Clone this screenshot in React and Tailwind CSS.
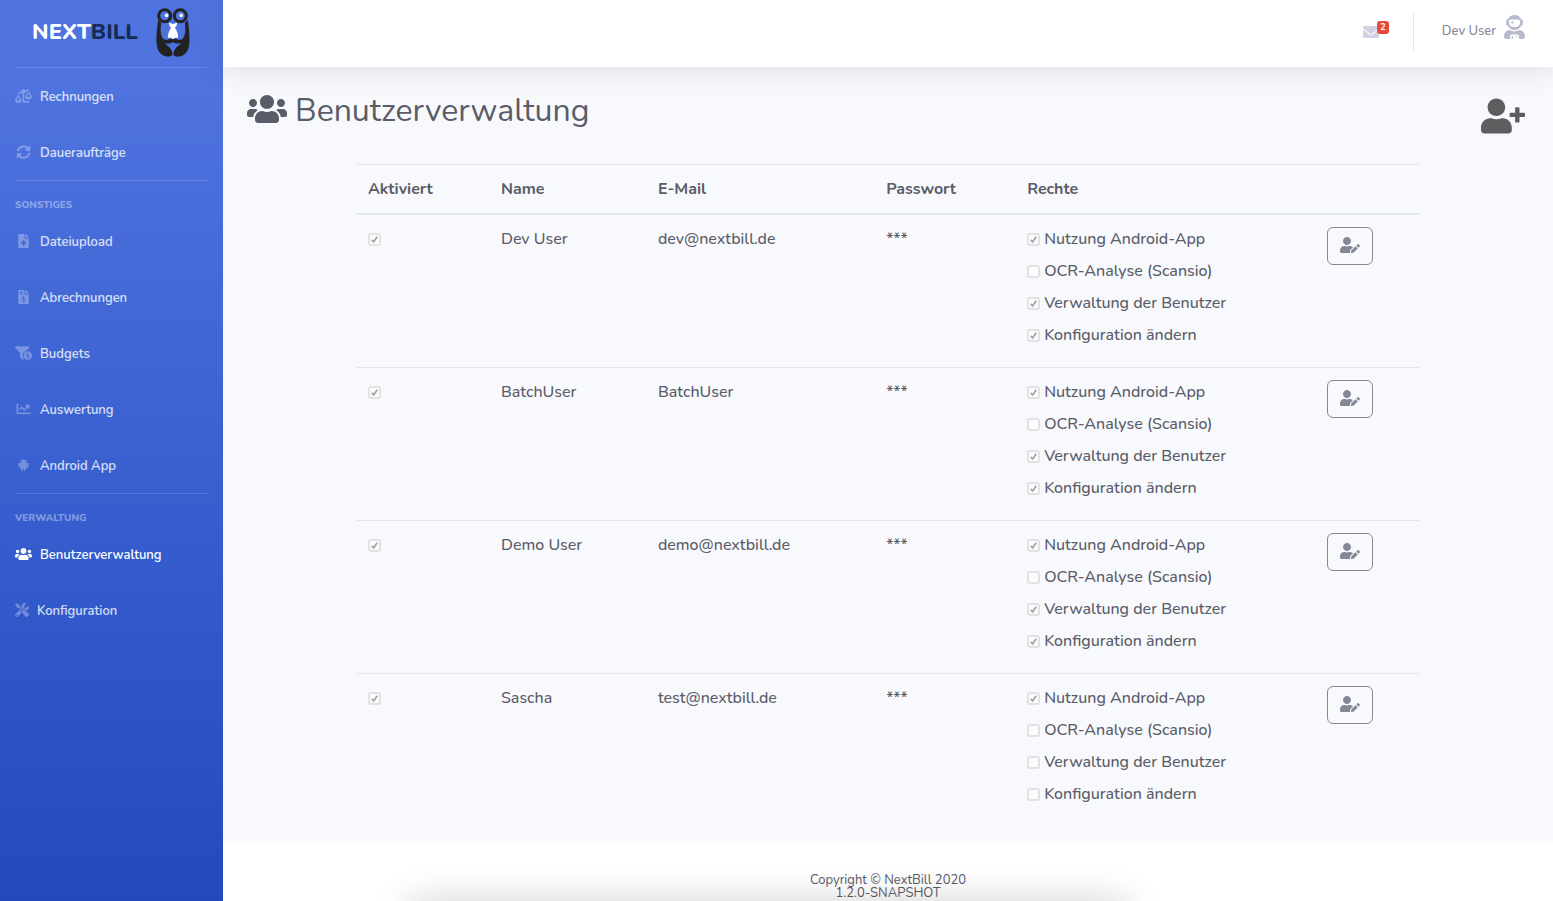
import React from "react";
import {
  FaBalanceScaleLeft,
  FaSyncAlt,
  FaFileUpload,
  FaFileInvoiceDollar,
  FaFunnelDollar,
  FaChartLine,
  FaUsers,
  FaTools,
  FaEnvelope,
  FaUserAstronaut,
  FaUserPlus,
  FaUserEdit,
} from "react-icons/fa";

function AndroidIcon({ className }) {
  return (
    <svg viewBox="0 0 448 512" fill="currentColor" className={className} aria-hidden="true">
      <path d="M89.6 204.5v115.8c0 15.4-12.1 27.7-27.5 27.7-15.3 0-30.1-12.4-30.1-27.7V204.5c0-15.1 14.8-27.5 30.1-27.5 15.1 0 27.5 12.4 27.5 27.5zm10.8 157c0 16.4 13.2 29.6 29.6 29.6h19.9l.3 61.1c0 36.9 55.2 36.6 55.2 0v-61.1h37.2v61.1c0 36.7 55.5 36.8 55.5 0v-61.1h20.2c16.2 0 29.4-13.2 29.4-29.6V182.1H100.4v179.4zm248-189.1H99.3c0-42.8 25.6-80 63.6-99.4l-19.1-35.3c-2.8-4.9 4.3-8 6.7-3.8l19.4 35.6c34.9-15.5 75-14.7 108.3 0L297.5 34c2.5-4.3 9.5-1.1 6.7 3.8L285.1 73c37.7 19.4 63.3 56.6 63.3 99.4zm-170.7-55.5c0-5.7-4.6-10.5-10.5-10.5-5.7 0-10.2 4.8-10.2 10.5s4.6 10.5 10.2 10.5c5.9 0 10.5-4.8 10.5-10.5zm113.4 0c0-5.7-4.6-10.5-10.2-10.5-5.9 0-10.5 4.8-10.5 10.5s4.6 10.5 10.5 10.5c5.6 0 10.2-4.8 10.2-10.5zm94.8 60.1c-15.1 0-27.5 12.1-27.5 27.5v115.8c0 15.4 12.4 27.7 27.5 27.7 15.4 0 30.1-12.4 30.1-27.7V204.5c0-15.4-14.8-27.5-30.1-27.5z" />
    </svg>
  );
}

function Mascot() {
  return (
    <svg viewBox="0 0 34 50" className="h-[50px] w-[34px]" aria-hidden="true">
      <path
        d="M2.2 12C.8 21 .2 30 .6 35.500C1.200 44 6.500 48.600 12 48.600C14.500 48.600 16 47.600 16.800 46.400C17.600 47.600 19.500 48.600 22 48.600C27.500 48.600 32.800 44 33.400 35.500C33.800 30 33.200 21 31.800 12L28.800 15C29.600 20 29.800 27 27 30.500C25.300 32.300 23 31.800 21 31.200C19.200 30.400 17.800 30.600 17 31.400C16.200 30.600 14.800 30.400 13 31.200C11 31.800 8.700 32.300 7 30.500C4.200 27 4.400 20 5.200 15Z"
        fill="#222"
      />
      <path d="M8.200 35.200C12 36 15 35.600 17 34.200C19 35.600 22 36 25.800 35.200C21 38 17.600 41 17.300 47L16.600 47C16.300 41 13 38 8.200 35.200Z" fill="#4e73df" />
      <path d="M12.800 14.500L17 16L21.200 14.500L20.300 18.600L18.800 19.600C20.800 22.500 22.400 26.500 22.200 30C20.500 29.600 18.500 29.800 17 31C15.500 29.800 13.500 29.600 11.800 30C11.600 26.500 13.200 22.500 15.200 19.600L13.700 18.600Z" fill="#fff" />
      <circle cx="8.700" cy="7.800" r="6" fill="#4e73df" stroke="#222" strokeWidth="3" />
      <circle cx="24.300" cy="7.800" r="6" fill="#4e73df" stroke="#222" strokeWidth="3" />
      <circle cx="10.600" cy="7.400" r="1.800" fill="#fff" />
      <circle cx="25.200" cy="7.400" r="1.800" fill="#fff" />
    </svg>
  );
}

function NavItem({ icon: Icon, label, active, narrow }) {
  return (
    <a
      href="#"
      aria-current={active ? "page" : undefined}
      className={
        "flex h-14 items-center gap-2 text-[13px] leading-5 font-semibold " +
        (active ? "text-white" : "text-white/80")
      }
    >
      <Icon
        className={
          (narrow ? "h-[14px] w-[14px] " : "h-[14px] w-[17px] ") + (active ? "text-white" : "text-white/30")
        }
      />
      <span className="pt-px">{label}</span>
    </a>
  );
}

function NavSection({ title, children }) {
  return (
    <div className="border-t border-white/15">
      {title && (
        <h2 className="flex h-8 items-center pt-4 text-[10px] font-extrabold text-white/40 uppercase">{title}</h2>
      )}
      {children}
    </div>
  );
}

function Check({ checked, label, hideLabel }) {
  return (
    <label className="flex h-6 items-center gap-1">
      <span className="grid size-[13px] shrink-0">
        <input
          type="checkbox"
          checked={checked}
          disabled
          readOnly
          aria-label={hideLabel ? label : undefined}
          className="col-start-1 row-start-1 size-[13px] appearance-none rounded-[3px] border-2 border-[#e2e2e4] bg-[#fcfcfd]"
        />
        {checked && (
          <svg viewBox="0 0 13 13" className="pointer-events-none col-start-1 row-start-1 size-[13px]" aria-hidden="true">
            <path d="M3.800 6.800L5.700 8.900L9.200 3.800" fill="none" stroke="#a3a3a5" strokeWidth="1.800" />
          </svg>
        )}
      </span>
      {!hideLabel && label}
    </label>
  );
}

const rights = ["Nutzung Android-App", "OCR-Analyse (Scansio)", "Verwaltung der Benutzer", "Konfiguration ändern"];

const users = [
  { name: "Dev User", mail: "dev@nextbill.de", granted: [true, false, true, true] },
  { name: "BatchUser", mail: "BatchUser", granted: [true, false, true, true] },
  { name: "Demo User", mail: "demo@nextbill.de", granted: [true, false, true, true] },
  { name: "Sascha", mail: "test@nextbill.de", granted: [true, false, false, false] },
];

export default function App() {
  return (
    <div className="flex min-h-screen bg-white font-[Nunito,Lato,sans-serif] text-[#5a5c69]">
      <aside className="w-[223px] shrink-0 bg-linear-to-b from-[#4e73df] from-10% to-[#224abe] px-4 pl-[15px]">
        <a href="#" className="flex h-[67px] items-center justify-center gap-[18px] pb-[2px]">
          <span className="text-[22px] font-extrabold text-white">
            NEXT<span className="text-[#162a56]">BILL</span>
          </span>
          <Mascot />
        </a>
        <nav>
          <NavSection>
            <NavItem icon={FaBalanceScaleLeft} label="Rechnungen" />
            <NavItem icon={FaSyncAlt} label="Daueraufträge" />
          </NavSection>
          <NavSection title="Sonstiges">
            <NavItem icon={FaFileUpload} label="Dateiupload" />
            <NavItem icon={FaFileInvoiceDollar} label="Abrechnungen" />
            <NavItem icon={FaFunnelDollar} label="Budgets" />
            <NavItem icon={FaChartLine} label="Auswertung" />
            <NavItem icon={AndroidIcon} label="Android App" />
          </NavSection>
          <NavSection title="Verwaltung">
            <NavItem icon={FaUsers} label="Benutzerverwaltung" active />
            <NavItem icon={FaTools} label="Konfiguration" narrow />
          </NavSection>
        </nav>
      </aside>

      <div className="flex min-w-0 grow flex-col">
        <header className="z-10 flex h-[67px] items-center justify-end bg-white pr-7 pb-[3px] shadow-[0_2px_28px_rgba(58,59,69,0.15)]">
          <a href="#" aria-label="Nachrichten" className="relative mr-[34px] text-[#d1d3e2]">
            <FaEnvelope className="size-4" />
            <span className="absolute -top-[3px] left-[14px] flex h-[13px] w-3 items-center justify-center rounded-[3px] bg-[#e74a3b] text-[9px] font-bold text-white">
              2
            </span>
          </a>
          <div className="h-[38px] w-px bg-[#e3e6f0]" />
          <a href="#" className="ml-7 flex items-center gap-2 text-[13px] font-medium text-[#858796]">
            Dev User
            <FaUserAstronaut className="mb-[10px] h-6 w-[21px] text-[#b7b9cc]" />
          </a>
        </header>

        <main className="grow bg-[#f8f9fc] px-6 pt-[25px] pb-[15px]">
          <div className="mb-6 flex items-start justify-between pr-1">
            <h1 className="flex items-center gap-2 text-[32px] leading-[38px]">
              <FaUsers className="-mt-1 size-10" />
              Benutzerverwaltung
            </h1>
            <button type="button" aria-label="Benutzer anlegen" className="h-12">
              <FaUserPlus className="h-9 w-11 text-[#5e5e60]" />
            </button>
          </div>

          <table className="mx-auto w-[83%] table-fixed border-collapse text-left text-base leading-6 font-medium">
            <colgroup>
              <col className="w-[12.5%]" />
              <col className="w-[14.750%]" />
              <col className="w-[21.450%]" />
              <col className="w-[13.250%]" />
              <col className="w-[28.200%]" />
              <col />
            </colgroup>
            <thead>
              <tr className="border-t border-b-2 border-[#e3e6f0]">
                <th className="p-3">Aktiviert</th>
                <th className="p-3">Name</th>
                <th className="p-3">E-Mail</th>
                <th className="p-3">Passwort</th>
                <th className="p-3">Rechte</th>
                <td className="p-3"></td>
              </tr>
            </thead>
            <tbody>
              {users.map((user) => (
                <tr key={user.name} className="border-t border-[#e3e6f0] align-top">
                  <td className="p-3">
                    <Check checked label={"Aktiviert: " + user.name} hideLabel />
                  </td>
                  <td className="p-3">{user.name}</td>
                  <td className="p-3">{user.mail}</td>
                  <td className="p-3">***</td>
                  <td className="p-3">
                    <div className="flex flex-col gap-2 pb-2">
                      {rights.map((right, i) => (
                        <Check key={right} checked={user.granted[i]} label={right} />
                      ))}
                    </div>
                  </td>
                  <td className="p-3">
                    <button
                      type="button"
                      aria-label={user.name + " bearbeiten"}
                      className="flex h-[38px] w-[46px] items-center justify-center rounded-md border border-[#858796] pb-[2px] text-[#858796]"
                    >
                      <FaUserEdit className="h-4 w-5" />
                    </button>
                  </td>
                </tr>
              ))}
            </tbody>
          </table>
        </main>

        <footer className="relative h-[60px] overflow-hidden bg-white pt-[33px] text-center text-[13px] leading-[13px]">
          <div className="absolute top-full left-[14%] h-10 w-[54%] shadow-[0_0_36px_rgba(0,0,0,0.18)]" />
          <p>Copyright © NextBill 2020</p>
          <p>1.2.0-SNAPSHOT</p>
        </footer>
      </div>
    </div>
  );
}
